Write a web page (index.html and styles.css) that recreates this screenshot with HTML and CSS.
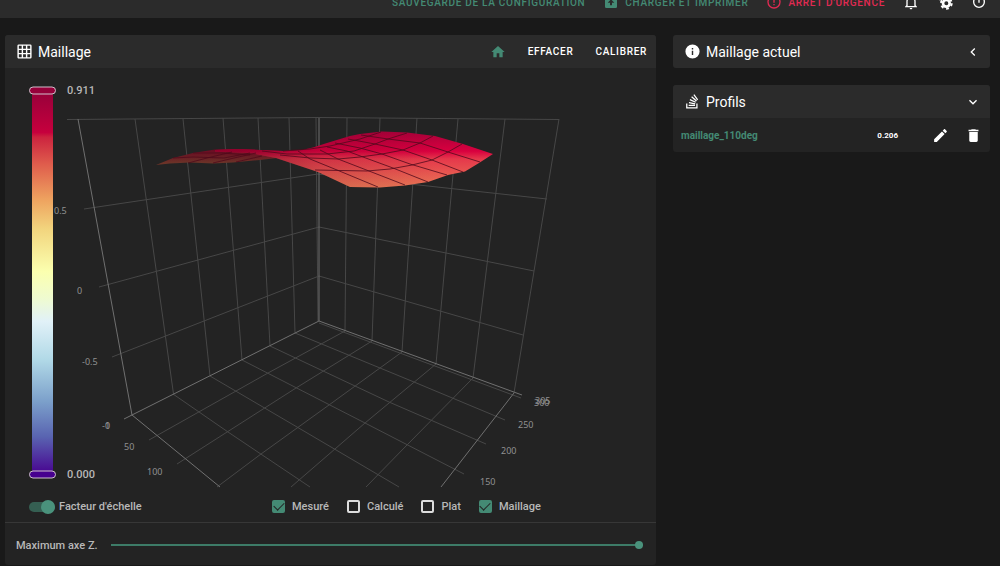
FILE: index.html
```html
<!DOCTYPE html>
<html lang="fr">
  <head>
    <meta charset="UTF-8" />
    <meta name="viewport" content="width=device-width, initial-scale=1.0" />
    <title>Maillage</title>
    <link rel="stylesheet" href="styles.css" />
  </head>
  <body>
    <header class="topbar">
      <button class="topbar-btn save">SAUVEGARDE DE LA CONFIGURATION</button>
      <button class="topbar-btn print">
        <svg class="icon" viewBox="0 0 24 24"><path fill-rule="evenodd" d="M5,3H19A2,2 0 0,1 21,5V19A2,2 0 0,1 19,21H5A2,2 0 0,1 3,19V5A2,2 0 0,1 5,3M12,8L7,13H10.5V17H13.5V13H17Z" /></svg>
        CHARGER ET IMPRIMER
      </button>
      <button class="topbar-btn stop">
        <svg class="icon" viewBox="0 0 24 24"><path d="M11,15H13V17H11V15M11,7H13V13H11V7M12,2A10,10 0 0,0 2,12A10,10 0 0,0 12,22A10,10 0 0,0 22,12A10,10 0 0,0 12,2M12,20A8,8 0 1,1 12,4A8,8 0 0,1 12,20Z" /></svg>
        ARRÊT D'URGENCE
      </button>
      <button class="topbar-btn round" aria-label="Notifications">
        <svg class="icon" viewBox="0 0 24 24"><path d="M10 21H14C14 22.1 13.1 23 12 23S10 22.1 10 21M21 19V20H3V19L5 17V11C5 7.9 7 5.2 10 4.3V4C10 2.9 10.9 2 12 2S14 2.9 14 4V4.3C17 5.2 19 7.9 19 11V17L21 19M17 11C17 8.2 14.8 6 12 6S7 8.2 7 11V18H17V11Z" /></svg>
      </button>
      <button class="topbar-btn round" aria-label="Paramètres">
        <svg class="icon" viewBox="0 0 24 24">
          <circle cx="14" cy="14" r="5" fill="none" stroke="currentColor" stroke-width="4" />
          <circle cx="14" cy="14" r="8" fill="none" stroke="currentColor" stroke-width="3" stroke-dasharray="4.2 4.18" />
          <circle cx="5" cy="5" r="3" fill="none" stroke="currentColor" stroke-width="3" />
        </svg>
      </button>
      <button class="topbar-btn round" aria-label="Alimentation">
        <svg class="icon" viewBox="0 0 24 24"><path d="M16.56,3.44L15.11,5.2C17.84,6.5 19,9 19,12A7,7 0 0,1 12,19A7,7 0 0,1 5,12C5,9 6.2,6.5 8.88,5.2L7.44,3.44C4.5,5 3,8 3,12A9,9 0 0,0 12,21A9,9 0 0,0 21,12C21,8 19.5,5 16.56,3.44M13,3H11V13H13" /></svg>
      </button>
    </header>

    <main class="layout">
      <section class="card">
        <div class="card-header">
          <svg class="icon big" viewBox="0 0 24 24"><path d="M10,4V8H14V4H10M16,4V8H20V4H16M16,10V14H20V10H16M16,16V20H20V16H16M14,20V16H10V20H14M8,20V16H4V20H8M8,14V10H4V14H8M8,8V4H4V8H8M10,14H14V10H10V14M4,2H20A2,2 0 0,1 22,4V20A2,2 0 0,1 20,22H4C2.92,22 2,21.1 2,20V4A2,2 0 0,1 4,2Z" /></svg>
          <h2>Maillage</h2>
          <div class="actions">
            <button class="action home" aria-label="Origine">
              <svg class="icon" viewBox="0 0 24 24"><path d="M10,20V14H14V20H19V12H22L12,3L2,12H5V20H10Z" /></svg>
            </button>
            <button class="action">EFFACER</button>
            <button class="action">CALIBRER</button>
          </div>
        </div>

        <!-- 3D bed mesh -->
        <svg class="chart" viewBox="5 68 651 420">
          <defs>
            <linearGradient id="scale" x1="0" y1="0" x2="0" y2="1">
              <stop offset="0" stop-color="#96003a" />
              <stop offset=".108" stop-color="#c6003d" />
              <stop offset=".12" stop-color="#cc233f" />
              <stop offset=".19" stop-color="#df5c4c" />
              <stop offset=".285" stop-color="#eea460" />
              <stop offset=".36" stop-color="#f2d57e" />
              <stop offset=".47" stop-color="#fbffaf" />
              <stop offset=".54" stop-color="#effbd0" />
              <stop offset=".6" stop-color="#e1f1f8" />
              <stop offset=".7" stop-color="#b1d9e7" />
              <stop offset=".81" stop-color="#7b9fca" />
              <stop offset=".9" stop-color="#5964b1" />
              <stop offset="1" stop-color="#47008f" />
            </linearGradient>
            <linearGradient id="mesh" gradientUnits="userSpaceOnUse" x1="400" y1="131" x2="400" y2="187">
              <stop offset="0" stop-color="#a80039" />
              <stop offset=".36" stop-color="#d9003f" />
              <stop offset=".5" stop-color="#e5384b" />
              <stop offset="1" stop-color="#e97555" />
            </linearGradient>
            <linearGradient id="shade" gradientUnits="userSpaceOnUse" x1="240" y1="0" x2="440" y2="0">
              <stop offset="0" stop-color="#300010" stop-opacity=".4" />
              <stop offset=".4" stop-color="#300010" stop-opacity=".12" />
              <stop offset="1" stop-color="#300010" stop-opacity="0" />
            </linearGradient>
            <linearGradient id="tail" gradientUnits="userSpaceOnUse" x1="0" y1="149" x2="0" y2="163">
              <stop offset="0" stop-color="#6d0823" />
              <stop offset=".45" stop-color="#6a1924" />
              <stop offset="1" stop-color="#6b3328" />
            </linearGradient>
          </defs>

          <g class="grid">
            <path d="M67,119.500L317,117.500L559,119.500" />
            <path d="M135,119L173.500,394M183,119L210,376M223,118L242,360M258,118L270,346M289,118L295,333M316,118L318,321" />
            <path d="M347,118L345,331M380,118L372,341M417,118L402,352M458,119L436,364M505,119L473,378M559,119L514,393" />
            <path d="M84,209L318,174L547,199M99,287L319,227L534,271M112,357L319,276L523,335" />
            <path d="M173,394L228,432L310,487M210,376L297,427L399,487M242,360L365,423L464,474M270,346L389,402L486,444M295,333L414,382L505,420M319,323L521,398" />
            <path d="M345,331L268,373L149,440M372,341L296,388L177,464M402,352L329,405L261,454L217,487M436,364L365,423L291,487M473,378L407,445L366,487" />
          </g>
          <g class="axis">
            <path d="M78,119L132,415L220,487" />
            <path d="M319,118V321L124,419" />
            <path d="M319,321L522,395M514,393L441,487" />
          </g>

          <g class="ticks">
            <text x="54" y="214">0.5</text>
            <text x="77" y="294">0</text>
            <text x="82" y="365">-0.5</text>
            <text x="102" y="429">-1</text>
            <text x="105" y="429">0</text>
            <text x="124" y="450">50</text>
            <text x="147" y="475">100</text>
            <text x="480" y="485">150</text>
            <text x="501" y="454">200</text>
            <text x="518" y="428">250</text>
            <text x="534" y="406">300</text>
            <text x="535" y="404">305</text>
          </g>

          <!-- measured surface -->
          <path fill="url(#tail)" d="M156,165L173,158L193,153L215,149.500L237,149L283,151L300,160L277,158L260,160L233,162.500L213,163.500L190,162.500L170,163.500Z" />
          <path fill="url(#mesh)" d="M215,150L237,149L260,150L283,151L302,150L313,147.500L327,143L350,136L360,134L382,131.500L407,132.500L435,136L463,144L493,154L479,163L465,171.500L448,175L428,182L405,185.500L380,187.500L350,187L318,172L297,165L276,158L250,153L215,151.500Z" />
          <path fill="url(#shade)" d="M215,150L237,149L260,150L283,151L302,150L313,147.500L327,143L350,136L360,134L382,131.500L407,132.500L435,136L463,144L493,154L479,163L465,171.500L448,175L428,182L405,185.500L380,187.500L350,187L318,172L297,165L276,158L250,153L215,151.500Z" />
          <g class="wires">
            <path d="M173,158L193,157L224,158L250,153M188,163L207,158L232,152M213,163L234,158L256,153M236,162L262,156M193,153L222,153L250,155" />
            <path d="M462,144L448,152L432,160L412,165L390,169L367,171L315,170" />
            <path d="M433,136L420,143L403,150L382,154L360,157L338,159L310,158L280,155" />
            <path d="M407,133L388,139L375,144L354,151L327,154L287,154L262,151" />
            <path d="M381,132L360,139L330,146L310,149L283,151" />
            <path d="M361,135L388,139L420,143L448,152L480,162" />
            <path d="M348,139L375,144L403,150L432,160L463,172" />
            <path d="M335,143L360,148L382,154L410,164L447,175" />
            <path d="M327,147L347,151L363,157L393,168L428,182" />
            <path d="M320,150L328,154L338,159L369,171L405,185" />
            <path d="M298,151L310,159L337,170L378,187" />
          </g>

          <rect x="32" y="91" width="21" height="384" fill="url(#scale)" />
          <rect class="handle" x="29.500" y="87" width="26" height="7" rx="3.500" fill="#96003a" />
          <rect class="handle" x="29.500" y="471" width="26" height="7" rx="3.500" fill="#47008f" />
          <text class="bound" x="67" y="94">0.911</text>
          <text class="bound" x="67" y="478">0.000</text>
        </svg>

        <div class="controls">
          <label class="option scale-option"><input type="checkbox" class="switch" checked />Facteur d'échelle</label>
          <label class="option"><input type="checkbox" class="check" checked />Mesuré</label>
          <label class="option"><input type="checkbox" class="check" />Calculé</label>
          <label class="option"><input type="checkbox" class="check" />Plat</label>
          <label class="option"><input type="checkbox" class="check" checked />Maillage</label>
        </div>
        <div class="slider-row">
          <label for="zmax">Maximum axe Z.</label>
          <input type="range" id="zmax" class="slider" min="0" max="100" value="100" />
        </div>
      </section>

      <aside class="side">
        <section class="card">
          <div class="card-header">
            <svg class="icon big" viewBox="0 0 24 24"><path d="M13,9H11V7H13M13,17H11V11H13M12,2A10,10 0 0,0 2,12A10,10 0 0,0 12,22A10,10 0 0,0 22,12A10,10 0 0,0 12,2Z" /></svg>
            <h2>Maillage actuel</h2>
            <button class="icon-btn toggle" aria-label="Ouvrir">
              <svg class="icon" viewBox="0 0 24 24"><path d="M15.410,16.580L10.830,12L15.410,7.410L14,6L8,12L14,18L15.410,16.580Z" /></svg>
            </button>
          </div>
        </section>

        <section class="card">
          <div class="card-header">
            <svg class="icon big" viewBox="0 0 24 24"><path d="M17.360,20.200V14.820H19.150V22H3V14.820H4.800V20.200H17.360M6.770,14.320L7.140,12.560L15.930,14.410L15.560,16.170L6.770,14.320M7.930,10.110L8.690,8.500L16.830,12.280L16.070,13.900L7.930,10.110M10.190,6.120L11.340,4.740L18.240,10.500L17.090,11.870L10.190,6.120M14.640,1.870L20,9.080L18.560,10.150L13.200,2.940L14.640,1.870M6.590,18.410V16.610H15.570V18.410H6.590Z" /></svg>
            <h2>Profils</h2>
            <button class="icon-btn toggle" aria-label="Fermer">
              <svg class="icon" viewBox="0 0 24 24"><path d="M7.410,8.580L12,13.170L16.590,8.580L18,10L12,16L6,10L7.410,8.580Z" /></svg>
            </button>
          </div>
          <div class="profile">
            <a href="#" class="profile-name">maillage_110deg</a>
            <span class="profile-value">0.206</span>
            <button class="icon-btn" aria-label="Modifier">
              <svg class="icon big" viewBox="0 0 24 24"><path d="M20.710,7.040C21.100,6.650 21.100,6 20.710,5.630L18.370,3.290C18,2.900 17.350,2.900 16.960,3.290L15.120,5.120L18.870,8.870M3,17.250V21H6.750L17.810,9.930L14.060,6.180L3,17.250Z" /></svg>
            </button>
            <button class="icon-btn" aria-label="Supprimer">
              <svg class="icon big" viewBox="0 0 24 24"><path d="M19,4H15.500L14.500,3H9.500L8.500,4H5V6H19M6,19A2,2 0 0,0 8,21H16A2,2 0 0,0 18,19V7H6V19Z" /></svg>
            </button>
          </div>
        </section>
      </aside>
    </main>
  </body>
</html>
```
FILE: styles.css
```css
* {
  box-sizing: border-box;
}
body {
  margin: 0;
  background-color: #191919;
  color: #fff;
  font-family: Roboto, sans-serif;
  font-size: 11px;
}
button {
  padding: 0;
  border: none;
  background: none;
  color: inherit;
  font-family: inherit;
  cursor: pointer;
}
.icon {
  display: block;
  flex: none;
  width: 16px;
  height: 16px;
  fill: currentColor;
}
.icon.big {
  width: 17px;
  height: 17px;
}

/* top bar */
.topbar {
  display: flex;
  justify-content: flex-end;
  align-items: flex-end;
  height: 18px;
  padding-right: 13px;
  background-color: #2b2b2b;
  overflow: hidden;
}
.topbar-btn {
  display: flex;
  flex: none;
  align-items: center;
  gap: 6px;
  height: 32px;
  margin-left: 18px;
  font-size: 10px;
  font-weight: 500;
  letter-spacing: 0.07em;
}
.save,
.print {
  color: #448a74;
}
.stop {
  color: #e02a52;
}

/* cards */
.layout {
  display: grid;
  grid-template-columns: 651fr 317fr;
  align-items: start;
  gap: 17px;
  padding: 17px 10px 0 5px;
}
.card {
  background-color: #232323;
  border-radius: 3px;
  overflow: hidden;
}
.card-header {
  display: flex;
  align-items: center;
  gap: 5px;
  height: 33px;
  padding: 0 9px 0 11px;
  background-color: #2b2b2b;
}
.card-header h2 {
  margin: 0;
  font-size: 14px;
  font-weight: 400;
}
.actions {
  display: flex;
  align-items: center;
  gap: 22px;
  margin-left: auto;
}
.action {
  font-size: 10px;
  font-weight: 500;
  letter-spacing: 0.07em;
}
.home {
  color: #448a74;
}
.side {
  display: grid;
  gap: 17px;
}
.toggle {
  margin-left: auto;
}

/* chart */
.chart {
  display: block;
  width: 100%;
}
.grid {
  fill: none;
  stroke: #474747;
}
.axis {
  fill: none;
  stroke: #707070;
}
.ticks {
  fill: #909090;
  font-family: "Noto Sans", sans-serif;
  font-size: 9px;
}
.wires {
  fill: none;
  stroke: #500a1c;
  stroke-opacity: 0.8;
}
.handle {
  stroke: #d0c0cc;
}
.bound {
  fill: #b8b8b8;
  font-size: 11px;
  font-weight: 500;
}

/* options */
.controls {
  display: flex;
  align-items: center;
  gap: 18px;
  height: 35px;
  padding: 3px 24px 0;
  border-bottom: 1px solid #373737;
  color: #b8b8b8;
  font-weight: 500;
}
.option {
  display: flex;
  align-items: center;
  gap: 7px;
}
.scale-option {
  flex: 0 0 225px;
  gap: 4px;
}
.switch,
.check,
.slider {
  margin: 0;
  appearance: none;
}
.switch {
  display: flex;
  align-items: center;
  justify-content: flex-end;
  width: 26px;
  height: 10px;
  border-radius: 5px;
  background-color: #355f52;
}
.switch::after {
  content: "";
  width: 14px;
  height: 14px;
  border-radius: 50%;
  background-color: #4a927c;
}
.check {
  display: flex;
  align-items: center;
  justify-content: center;
  width: 13px;
  height: 13px;
  border: 2px solid #ddd;
  border-radius: 2px;
}
.check:checked {
  border-color: #448a74;
  background-color: #448a74;
}
.check:checked::after {
  content: "";
  flex: none;
  width: 9px;
  height: 5px;
  margin-bottom: 3px;
  border: solid #232323;
  border-width: 0 0 1px 1px;
  transform: rotate(-45deg);
}
.slider-row {
  display: flex;
  align-items: center;
  gap: 13px;
  height: 42px;
  padding: 2px 13px 0 11px;
  color: #b8b8b8;
  font-weight: 500;
}
.slider {
  flex: 1;
  height: 8px;
  background: linear-gradient(#3d7b67, #3d7b67) center / 100% 2px no-repeat;
}
.slider::-webkit-slider-thumb {
  appearance: none;
  width: 8px;
  height: 8px;
  border-radius: 50%;
  background-color: #4a927c;
}

/* profiles */
.profile {
  display: flex;
  align-items: center;
  gap: 16px;
  height: 34px;
  padding: 0 8px;
}
.profile-name {
  margin-right: auto;
  color: #448a74;
  font-size: 10px;
  font-weight: 700;
  text-decoration: none;
}
.profile-value {
  margin-right: 18px;
  font-size: 8px;
  font-weight: 700;
}
```
